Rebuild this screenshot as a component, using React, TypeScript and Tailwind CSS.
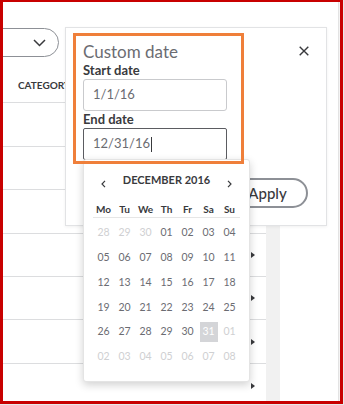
import React from "react";

const font = { fontFamily: "Lato, 'Open Sans', Arial, sans-serif" };

const rowHeights = ["h-[44px]", "h-[43px]", "h-[44px]", "h-[43px]", "h-[43px]", "h-[44px]"];

const weekdays = ["Mo", "Tu", "We", "Th", "Fr", "Sa", "Su"];

type Day = { label: string; out?: boolean; selected?: boolean };

const weeks: Day[][] = [
  [
    { label: "28", out: true },
    { label: "29", out: true },
    { label: "30", out: true },
    { label: "01" },
    { label: "02" },
    { label: "03" },
    { label: "04" },
  ],
  ["05", "06", "07", "08", "09", "10", "11"].map((label) => ({ label })),
  ["12", "13", "14", "15", "16", "17", "18"].map((label) => ({ label })),
  ["19", "20", "21", "22", "23", "24", "25"].map((label) => ({ label })),
  [
    { label: "26" },
    { label: "27" },
    { label: "28" },
    { label: "29" },
    { label: "30" },
    { label: "31", selected: true },
    { label: "01", out: true },
  ],
  ["02", "03", "04", "05", "06", "07", "08"].map((label) => ({ label, out: true })),
];

const Chevron = ({ dir }: { dir: "left" | "right" }) => (
  <svg width="5" height="8" viewBox="0 0 5 8" fill="none">
    <path
      d={dir === "left" ? "M4 0.8 L1 4 L4 7.2" : "M1 0.8 L4 4 L1 7.2"}
      stroke="#393a3d"
      strokeWidth="1.2"
    />
  </svg>
);

const Calendar = () => (
  <div className="absolute left-[10px] top-[126px] z-10 h-[223px] w-[167px] rounded-[3px] border border-[#e4e4e4] bg-white px-[9px] pt-[12px] shadow-[0_3px_8px_rgba(0,0,0,0.18)]">
    {/* month header */}
    <div className="grid h-[16px] grid-cols-7 items-center">
      <div className="flex justify-center pt-[7px]">
        <Chevron dir="left" />
      </div>
      <div className="col-span-5 text-center text-[11px] font-bold leading-[16px] text-[#393a3d]">
        DECEMBER 2016
      </div>
      <div className="flex justify-center pt-[7px]">
        <Chevron dir="right" />
      </div>
    </div>

    {/* weekday labels */}
    <div className="mt-[14px] grid h-[16px] grid-cols-7 items-center border-b border-[#e6e6e6] pb-[1px]">
      {weekdays.map((d) => (
        <div key={d} className="text-center text-[10px] font-bold leading-[14px] text-[#393a3d]">
          {d}
        </div>
      ))}
    </div>

    {/* days */}
    <div className="mt-[3px] grid grid-cols-7 auto-rows-[24.7px]">
      {weeks.flat().map((day, i) => (
        <div key={i} className="flex items-center justify-center">
          {day.selected ? (
            <span className="flex h-[20px] w-[18px] items-center justify-center bg-[#d4d5d8] text-[10.5px] text-white">
              {day.label}
            </span>
          ) : (
            <span className={`text-[10.5px] ${day.out ? "text-[#cfd0d2]" : "text-[#6b6c72]"}`}>{day.label}</span>
          )}
        </div>
      ))}
    </div>
  </div>
);

const CustomDatePopover = () => (
  <div className="absolute left-[62px] top-[25px] z-10 h-[199px] w-[262px] border border-[#e2e3e5] bg-white pl-[7px] pt-[5px] shadow-[0_1px_3px_rgba(0,0,0,0.06)]">
    <div className="flex">
      {/* highlighted form block */}
      <div className="relative h-[131px] w-[171px] p-[3px]">
        <div className="pl-[7px] pt-[6px]">
          <div className="text-[17px] leading-[20px] text-[#6b6c72]">Custom date</div>
          <div className="text-[13px] font-bold leading-[16px] text-[#393a3d]">Start date</div>
          <div className="mt-[1px] flex h-[32px] w-[144px] items-center rounded-[3px] border border-[#c9cacd] pl-[9px] text-[13px] text-[#6b6c72]">
            1/1/16
          </div>
          <div className="text-[13px] font-bold leading-[16px] text-[#393a3d]">End date</div>
          <div className="mt-[1px] flex h-[32px] w-[144px] items-center rounded-[2px] border border-[#5b5c61] pl-[9px] text-[13px] text-[#6b6c72]">
            12/31/16
            <span className="ml-[1px] h-[15px] w-px bg-[#393a3d]" />
          </div>
        </div>
        <Calendar />
        <div className="pointer-events-none absolute inset-0 z-20 border-[3px] border-[#ef7f3a]" />
      </div>

      <div className="flex flex-1 justify-end pr-[17px] pt-[13px]">
        <svg width="10" height="10" viewBox="0 0 10 10">
          <path d="M0.7 0.7 L9.3 9.3 M9.3 0.7 L0.7 9.3" stroke="#393a3d" strokeWidth="1.4" />
        </svg>
      </div>
    </div>

    <div className="mt-[14px] flex justify-end pr-[18px]">
      <button className="h-[30px] w-[81px] rounded-full border-2 border-[#8d9096] text-center text-[15px] font-medium leading-[26px] text-[#393a3d]">
        Apply
      </button>
    </div>
  </div>
);

export default function App() {
  return (
    <div className="h-[405px] w-[344px] bg-[#e9e9e9]" style={font}>
      <div className="relative h-[404px] w-[343px] overflow-hidden border-x-[3px] border-b-[3px] border-t-2 border-[#c80000] bg-white">
        <div className="flex h-full">
          <div className="flex flex-col">
            {/* filter dropdown */}
            <div className="ml-[-25px] mt-[26px] flex h-[29px] w-[81px] shrink-0 items-center justify-end rounded-full border-[1.5px] border-[#8d9096] pr-[12px]">
              <svg width="13" height="8" viewBox="0 0 13 8" fill="none">
                <path d="M1 1 L6.5 6.5 L12 1" stroke="#393a3d" strokeWidth="1.5" />
              </svg>
            </div>

            <div className="flex shrink-0">
              {/* table */}
              <div className="w-[263px]">
                <div className="h-[46px] border-b border-[#dcdddf] pl-[15px] pt-[21px] text-[10px] font-bold leading-[14px] text-[#393a3d]">
                  CATEGORY
                </div>
                {rowHeights.map((h, i) => (
                  <div key={i} className={`${h} flex items-center justify-end border-b border-[#dcdddf] pr-[11px]`}>
                    <span className="h-0 w-0 border-y-[3px] border-l-[4px] border-y-transparent border-l-[#393a3d]" />
                  </div>
                ))}
                <div className="flex h-[44px] items-center justify-end pr-[11px]">
                  <span className="h-0 w-0 border-y-[3px] border-l-[4px] border-y-transparent border-l-[#393a3d]" />
                </div>
              </div>
              <div className="w-[14px] bg-[#f1f1f1]" />
            </div>
          </div>
          <div className="flex-1" />
          <div className="w-[2px] border-l border-[#e3e3e3] bg-[#f4f4f4]" />
        </div>

        <CustomDatePopover />
      </div>
    </div>
  );
}
